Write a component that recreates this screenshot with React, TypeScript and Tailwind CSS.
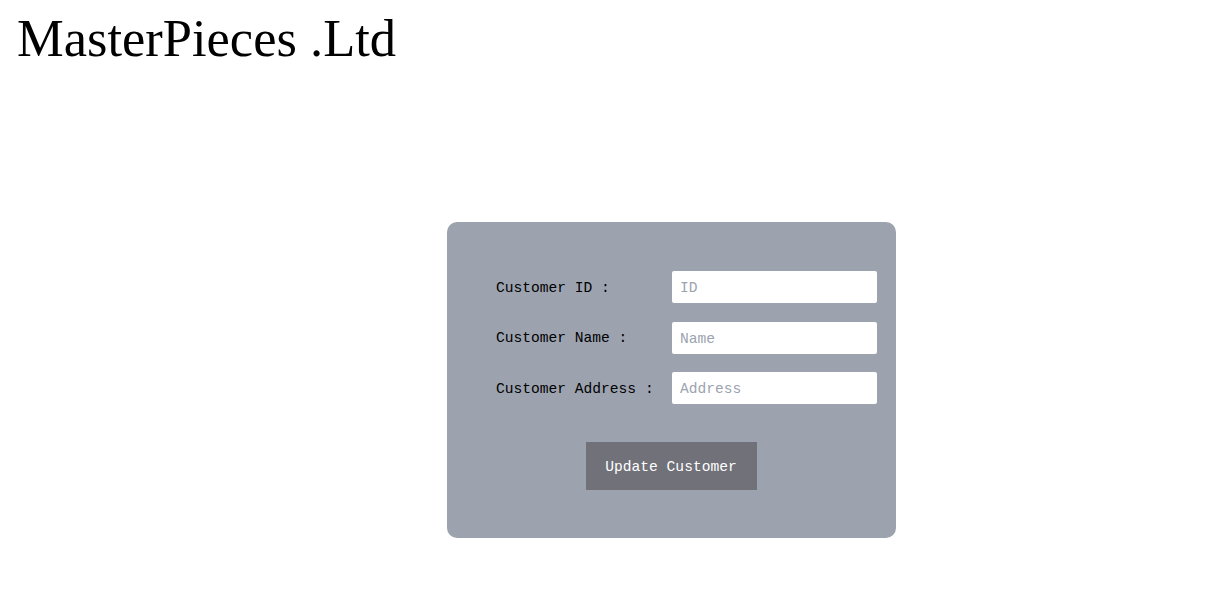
const FIELDS = [
  { label: "Customer ID :", placeholder: "ID" },
  { label: "Customer Name :", placeholder: "Name" },
  { label: "Customer Address :", placeholder: "Address" },
];

const mono = "font-['Liberation_Mono','DejaVu_Sans_Mono',monospace] text-[14.6px]";

function FieldRow({ label, placeholder }: { label: string; placeholder: string }) {
  return (
    <div className="flex items-center h-[32px]">
      <label className={`w-[176px] shrink-0 pt-[3px] text-black ${mono}`}>{label}</label>
      <input
        type="text"
        placeholder={placeholder}
        className={`w-[205px] h-[32px] rounded-[2px] bg-white px-2 pt-[2px] text-black outline-none placeholder:text-[#9ca3af] ${mono}`}
      />
    </div>
  );
}

export default function App() {
  return (
    <main className="bg-white min-h-screen w-full">
      <h1 className="pl-[17px] pt-[9px] font-['Liberation_Serif',Georgia,serif] text-[52.5px] leading-[58px] text-black">
        MasterPieces .Ltd
      </h1>

      <div className="flex justify-center pl-[113px] mt-[155px]">
        <form className="w-[449px] h-[316px] rounded-[10px] bg-[#9ca3af] pt-[49px] pl-[49px]">
          <div className="flex flex-col gap-[18.5px]">
            {FIELDS.map((f) => (
              <FieldRow key={f.label} {...f} />
            ))}
          </div>

          <div className="flex justify-center pr-[50px] mt-[38px]">
            <button
              type="button"
              className={`w-[171px] h-[48px] bg-[#71717a] pt-[4px] text-white ${mono}`}
            >
              Update Customer
            </button>
          </div>
        </form>
      </div>
    </main>
  );
}
